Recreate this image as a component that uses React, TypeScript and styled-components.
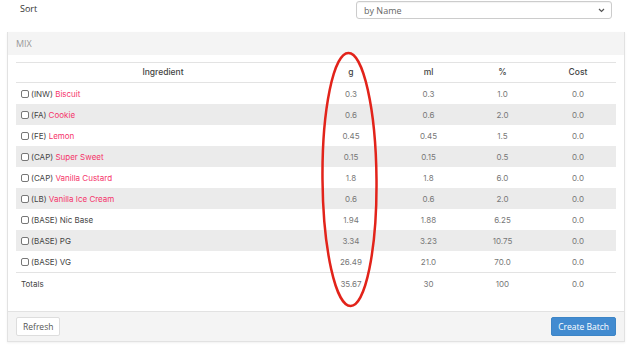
import styled, { createGlobalStyle } from 'styled-components';

const GlobalStyle = createGlobalStyle`
  html, body {
    margin: 0;
    padding: 0;
    background: #ffffff;
  }
  body {
    font-family: 'Open Sans', 'Liberation Sans', sans-serif;
    color: #555;
  }
`;

const Page = styled.div`
  position: relative;
  width: 632px;
  height: 354px;
  padding: 0 7px;
  box-sizing: border-box;
  overflow: hidden;
`;

const SortRow = styled.div`
  display: flex;
  justify-content: space-between;
  align-items: flex-start;
  height: 32px;
  padding: 1px 13px 0 13px;
  box-sizing: border-box;
`;

const SortLabel = styled.label`
  font-size: 9px;
  color: #333;
  margin-top: 1px;
`;

const Select = styled.div`
  width: 256px;
  height: 18px;
  border: 1px solid #ccc;
  border-radius: 3px;
  display: flex;
  align-items: center;
  justify-content: space-between;
  padding: 0 6px 0 7px;
  box-sizing: border-box;
  font-size: 9px;
  color: #666;
  box-shadow: inset 0 1px 1px rgba(0, 0, 0, 0.05);
`;

const Panel = styled.div`
  border: 1px solid #e2e2e2;
  border-top: none;
  box-shadow: 0 1px 2px rgba(0, 0, 0, 0.06);
`;

const PanelHeading = styled.div`
  background: #f4f4f4;
  height: 23px;
  padding: 0 8px;
  display: flex;
  align-items: center;
  font-size: 9px;
  color: #999;
`;

const PanelBody = styled.div`
  padding: 7px 8px 17px 8px;
`;

const Table = styled.table`
  width: 100%;
  border-collapse: collapse;
  font-family: 'Inter', 'Liberation Sans', sans-serif;
  font-size: 8px;
  table-layout: fixed;
`;

const HeadCell = styled.th<{ $w?: number }>`
  width: ${(p) => (p.$w ? `${p.$w}px` : 'auto')};
  height: 19px;
  padding: 0;
  font-size: 8.5px;
  font-weight: 500;
  color: #444;
  text-align: center;
  line-height: 1;
  border-top: 1px solid #e3e3e3;
  border-bottom: 1px solid #e3e3e3;
`;

const Row = styled.tr<{ $striped?: boolean; $total?: boolean }>`
  background: ${(p) => (p.$striped ? '#ebebeb' : 'transparent')};
  border-top: ${(p) => (p.$total ? '1px solid #e3e3e3' : 'none')};

  & > td {
    height: 21px;
    line-height: 1;
  }
`;

const NameCell = styled.td`
  padding: 0 0 0 5px;
  color: #444;
  white-space: nowrap;
`;

const NumCell = styled.td`
  padding: 0;
  text-align: center;
  color: #777;
`;

const Check = styled.input`
  appearance: none;
  width: 8px;
  height: 8px;
  margin: 0 2px 0 0;
  border: 1px solid #777;
  border-radius: 2px;
  vertical-align: -1px;
  background: #fff;
`;

const Flavor = styled.span`
  color: #f5346a;
`;

const PanelFooter = styled.div`
  background: #f4f4f4;
  border-top: 1px solid #e2e2e2;
  height: 29px;
  padding: 0 8px;
  display: flex;
  align-items: center;
  justify-content: space-between;
`;

const Button = styled.button<{ $primary?: boolean }>`
  height: 19px;
  padding: 0 6px;
  font-family: 'Open Sans', 'Liberation Sans', sans-serif;
  font-size: 8.5px;
  border-radius: 2px;
  border: 1px solid ${(p) => (p.$primary ? '#3d85c6' : '#ddd')};
  background: ${(p) => (p.$primary ? '#428bd0' : '#fff')};
  color: ${(p) => (p.$primary ? '#fff' : '#555')};
`;

const Annotation = styled.svg`
  position: absolute;
  left: 0;
  top: 0;
  pointer-events: none;
`;

type Item = {
  tag: string;
  name: string;
  flavor: boolean;
  g: string;
  ml: string;
  pct: string;
};

const items: Item[] = [
  { tag: 'INW', name: 'Biscuit', flavor: true, g: '0.3', ml: '0.3', pct: '1.0' },
  { tag: 'FA', name: 'Cookie', flavor: true, g: '0.6', ml: '0.6', pct: '2.0' },
  { tag: 'FE', name: 'Lemon', flavor: true, g: '0.45', ml: '0.45', pct: '1.5' },
  { tag: 'CAP', name: 'Super Sweet', flavor: true, g: '0.15', ml: '0.15', pct: '0.5' },
  { tag: 'CAP', name: 'Vanilla Custard', flavor: true, g: '1.8', ml: '1.8', pct: '6.0' },
  { tag: 'LB', name: 'Vanilla Ice Cream', flavor: true, g: '0.6', ml: '0.6', pct: '2.0' },
  { tag: 'BASE', name: 'Nic Base', flavor: false, g: '1.94', ml: '1.88', pct: '6.25' },
  { tag: 'BASE', name: 'PG', flavor: false, g: '3.34', ml: '3.23', pct: '10.75' },
  { tag: 'BASE', name: 'VG', flavor: false, g: '26.49', ml: '21.0', pct: '70.0' },
];

export default function App() {
  return (
    <Page>
      <GlobalStyle />
      <SortRow>
        <SortLabel>Sort</SortLabel>
        <Select>
          <span>by Name</span>
          <svg width="7" height="5" viewBox="0 0 7 5">
            <path d="M1 1l2.5 2.5L6 1" fill="none" stroke="#555" strokeWidth="1.2" />
          </svg>
        </Select>
      </SortRow>

      <Panel>
        <PanelHeading>MIX</PanelHeading>
        <PanelBody>
          <Table>
            <thead>
              <tr>
                <HeadCell $w={294}>Ingredient</HeadCell>
                <HeadCell $w={82}>g</HeadCell>
                <HeadCell $w={73}>ml</HeadCell>
                <HeadCell $w={75}>%</HeadCell>
                <HeadCell>Cost</HeadCell>
              </tr>
            </thead>
            <tbody>
              {items.map((it, i) => (
                <Row key={it.tag + it.name} $striped={i % 2 === 1}>
                  <NameCell>
                    <Check type="checkbox" readOnly />({it.tag}){' '}
                    {it.flavor ? <Flavor>{it.name}</Flavor> : it.name}
                  </NameCell>
                  <NumCell>{it.g}</NumCell>
                  <NumCell>{it.ml}</NumCell>
                  <NumCell>{it.pct}</NumCell>
                  <NumCell>0.0</NumCell>
                </Row>
              ))}
              <Row $total>
                <NameCell>Totals</NameCell>
                <NumCell>35.67</NumCell>
                <NumCell>30</NumCell>
                <NumCell>100</NumCell>
                <NumCell>0.0</NumCell>
              </Row>
            </tbody>
          </Table>
        </PanelBody>
        <PanelFooter>
          <Button>Refresh</Button>
          <Button $primary>Create Batch</Button>
        </PanelFooter>
      </Panel>

      <Annotation width="632" height="354" viewBox="0 0 632 354">
        <ellipse
          cx="349.5"
          cy="179.5"
          rx="27"
          ry="126.5"
          fill="none"
          stroke="#e2231a"
          strokeWidth="2.5"
          transform="rotate(-0.5 349.5 179.5)"
        />
      </Annotation>
    </Page>
  );
}
